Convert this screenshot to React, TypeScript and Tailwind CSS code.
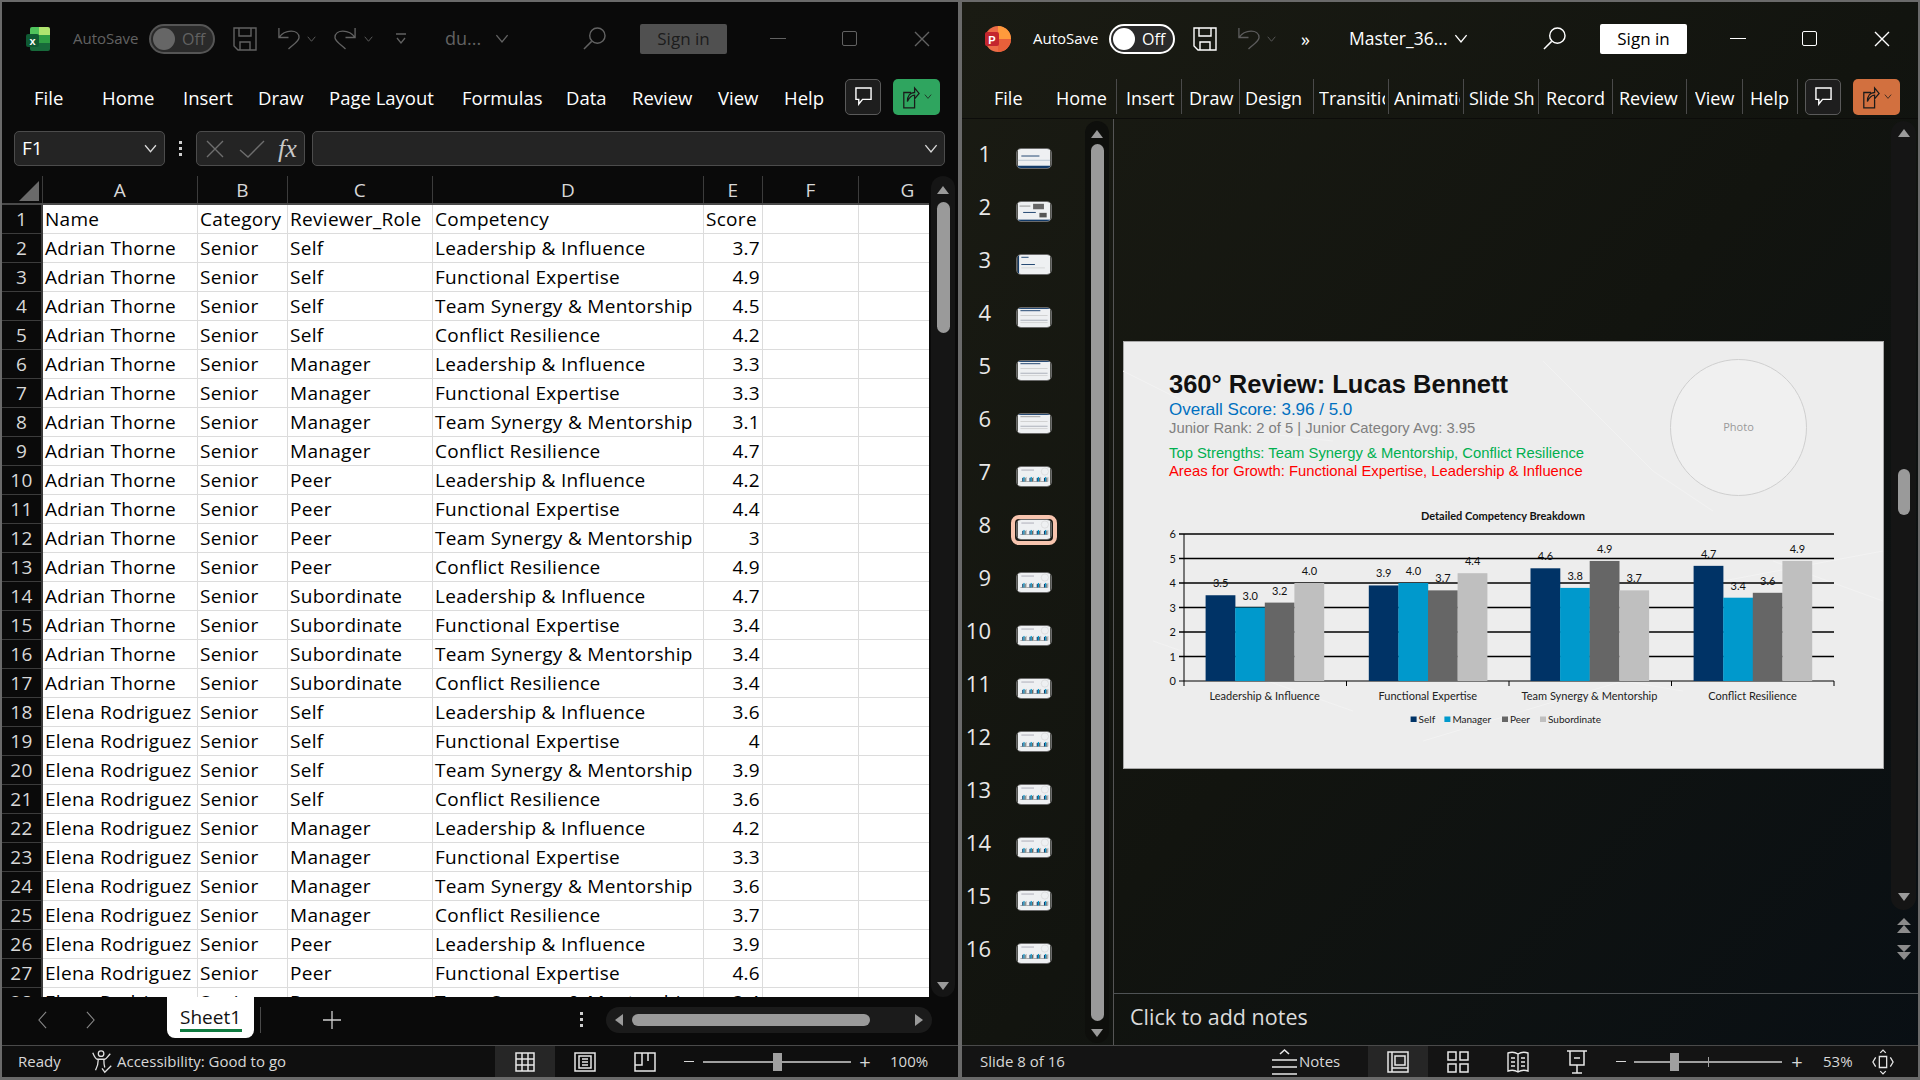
const names = ["Adrian Thorne", "Elena Rodriguez"];
const comps = ["Leadership & Influence", "Functional Expertise", "Team Synergy & Mentorship", "Conflict Resilience"];
const roles = ["Self", "Manager", "Peer", "Subordinate"];
const scores = ["3.7", "4.9", "4.5", "4.2", "3.3", "3.3", "3.1", "4.7", "4.2", "4.4", "3", "4.9", "4.7", "3.4", "3.4", "3.4", "3.6", "4", "3.9", "3.6", "4.2", "3.3", "3.6", "3.7", "3.9", "4.6", "3.4"];

const rows = scores.map((score, i) => ({
  name: names[Math.floor(i / 16)],
  role: roles[Math.floor(i / 4) % 4],
  comp: comps[i % 4],
  score,
}));

const chartData = [
  { label: "Leadership & Influence", x: 82.6, vals: [3.5, 3.0, 3.2, 4.0] },
  { label: "Functional Expertise", x: 245.8, vals: [3.9, 4.0, 3.7, 4.4] },
  { label: "Team Synergy & Mentorship", x: 407.5, vals: [4.6, 3.8, 4.9, 3.7] },
  { label: "Conflict Resilience", x: 570.6, vals: [4.7, 3.4, 3.6, 4.9] },
];
const barColors = ["#003366", "#0099cc", "#666666", "#bfbfbf"];

const Tri = ({ dir = "up", className = "" }: { dir?: "up" | "down" | "left" | "right"; className?: string }) => {
  const pts = { up: "6,1 12,9 0,9", down: "0,1 12,1 6,9", left: "9,0 9,12 1,6", right: "1,0 1,12 9,6" }[dir];
  const box = dir === "left" || dir === "right" ? "0 0 10 12" : "0 0 12 10";
  const size = dir === "left" || dir === "right" ? "w-[10px] h-[12px]" : "w-[12px] h-[10px]";
  return (
    <svg viewBox={box} className={`${size} shrink-0 ${className}`} fill="#9a9a9a">
      <polygon points={pts} />
    </svg>
  );
};

const Chevron = ({ className = "" }: { className?: string }) => (
  <svg viewBox="0 0 12 8" className={className} fill="none" stroke="currentColor" strokeWidth="1.2">
    <path d="M1 1l5 6 5-6" />
  </svg>
);

const SaveIcon = () => (
  <svg viewBox="0 0 24 24" className="w-[24px] h-[24px] ml-[18px] shrink-0" fill="none" stroke="currentColor" strokeWidth="1.4">
    <path d="M1 1h22v22H5l-4-4z" />
    <path d="M6 1v8h12V1M7 23v-8h10v8" />
  </svg>
);

const UndoIcon = ({ className = "" }: { className?: string }) => (
  <svg viewBox="0 0 24 24" className={`w-[23px] h-[23px] shrink-0 ${className}`} fill="none" stroke="currentColor" strokeWidth="1.4">
    <path d="M2 1v10h10M2 11C8 2 23 2 23 11c0 4-7 8-11 12" />
  </svg>
);

const ExcelLogo = () => (
  <svg viewBox="0 0 24 24" className="w-[24px] h-[24px] shrink-0">
    <path d="M4 2a2 2 0 0 1 2-2h7v8H4z" fill="#4fc35c" />
    <path d="M13 0h9a2 2 0 0 1 2 2v6H13z" fill="#b0e56f" />
    <path d="M4 8h9v8H4z" fill="#1f8f45" />
    <path d="M13 8h11v8H13z" fill="#2f9e44" />
    <path d="M4 16h20v6a2 2 0 0 1-2 2H6a2 2 0 0 1-2-2z" fill="#17693a" />
    <rect x="0" y="7" width="13" height="13" rx="2" fill="#0f5a33" />
    <text x="6.5" y="17.5" textAnchor="middle" fontSize="11" fontWeight="700" fill="#fff" fontFamily="Liberation Sans, sans-serif">x</text>
  </svg>
);

const PptLogo = () => (
  <svg viewBox="0 0 26 26" className="w-[26px] h-[26px] shrink-0">
    <circle cx="13" cy="13" r="13" fill="#ed6c47" />
    <path d="M13 0a13 13 0 0 1 13 13H13z" fill="#ff9a3c" />
    <path d="M13 13h13a13 13 0 0 1-13 13z" fill="#e8603a" />
    <rect x="0" y="6" width="14" height="14" rx="2" fill="#c4262e" />
    <text x="7" y="17.5" textAnchor="middle" fontSize="11" fontWeight="700" fill="#fff" fontFamily="Liberation Sans, sans-serif">P</text>
  </svg>
);

const TitleBar = ({ ppt }: { ppt?: boolean }) => (
  <div className={`h-[73px] flex items-center shrink-0 ${ppt ? "pl-[23px] text-white" : "pl-[24px] text-[#626262]"}`}>
    {ppt ? <PptLogo /> : <ExcelLogo />}
    <span className={`${ppt ? "ml-[22px]" : "ml-[23px]"} w-[66px] text-[15px] whitespace-nowrap`}>AutoSave</span>
    <div className={`ml-[10px] w-[66px] h-[30px] rounded-full border-2 flex items-center pl-[2px] shrink-0 ${ppt ? "border-white bg-[#2a2a2a]" : "border-[#555] bg-[#2a2a2a]"}`}>
      <div className={`w-[22px] h-[22px] rounded-full ${ppt ? "bg-white" : "bg-[#666]"}`}></div>
      <span className="ml-[7px] text-[16px]">Off</span>
    </div>
    <SaveIcon />
    <UndoIcon className={`ml-[20px] ${ppt ? "text-[#5c5c5c]" : ""}`} />
    <Chevron className={`ml-[7px] w-[9px] h-[6px] shrink-0 ${ppt ? "text-[#5c5c5c]" : ""}`} />
    {ppt ? (
      <>
        <span className="ml-[25px] w-[18px] text-[18px] leading-none">»</span>
        <span className="ml-[30px] w-[91px] text-[17.5px] whitespace-nowrap">Master_36...</span>
        <Chevron className="ml-[14px] w-[14px] h-[9px] shrink-0" />
        <div className="ml-[75px]"></div>
      </>
    ) : (
      <>
        <UndoIcon className="ml-[18px] -scale-x-100" />
        <Chevron className="ml-[7px] w-[9px] h-[6px] shrink-0" />
        <svg viewBox="0 0 12 14" className="ml-[22px] w-[12px] h-[14px] shrink-0" fill="none" stroke="currentColor" strokeWidth="1.3">
          <path d="M1 2h10M2 6l4 5 4-5" />
        </svg>
        <span className="ml-[38px] w-[36px] text-[18px] whitespace-nowrap">du...</span>
        <Chevron className="ml-[14px] w-[14px] h-[9px] shrink-0" />
        <div className="ml-[74px]"></div>
      </>
    )}
    <svg viewBox="0 0 24 24" className="w-[23px] h-[23px] shrink-0" fill="none" stroke="currentColor" strokeWidth="1.5">
      <circle cx="15" cy="9" r="8" />
      <path d="M9 15L1 23" />
    </svg>
    <div className={`ml-[34px] w-[87px] h-[30px] rounded-[2px] flex items-center justify-center text-[17px] shrink-0 ${ppt ? "bg-white text-black" : "bg-[#505050] text-[#1c1c1c]"}`}>
      Sign in
    </div>
    <div className="ml-[43px] w-[16px] h-[1.5px] bg-current shrink-0"></div>
    <div className="ml-[56px] w-[15px] h-[15px] border-[1.5px] border-current rounded-[2px] shrink-0"></div>
    <svg viewBox="0 0 16 16" className="ml-[57px] w-[16px] h-[16px] shrink-0" fill="none" stroke="currentColor" strokeWidth="1.4">
      <path d="M1 1l14 14M15 1L1 15" />
    </svg>
  </div>
);

const RibbonButtons = ({ ppt }: { ppt?: boolean }) => (
  <>
    <div className="w-[36px] h-[36px] rounded-[5px] border border-[#5a5a5a] bg-[#1e1e1e] flex items-center justify-center shrink-0">
      <svg viewBox="0 0 18 20" className="w-[17px] h-[19px]" fill="none" stroke="#fff" strokeWidth="1.5">
        <path d="M1 1h16v12H8l-4 5v-5H1z" />
      </svg>
    </div>
    <div className={`ml-[12px] w-[47px] h-[36px] rounded-[5px] flex items-center justify-center gap-[4px] shrink-0 ${ppt ? "bg-[#d2703f]" : "bg-[#2fa55f]"}`}>
      <svg viewBox="0 0 20 26" className="w-[18px] h-[24px]" fill="none" stroke="#1a1a1a" strokeWidth="1.4">
        <path d="M10 8H2v17h12v-9M6 18c0-6 3-10 8-10V3l5 6-5 6v-4c-3 0-6 3-8 7z" />
      </svg>
      <Chevron className="w-[8px] h-[5px] text-[#1a1a1a]" />
    </div>
  </>
);

const xlTabs = [
  { label: "File", cls: "w-[68px]" },
  { label: "Home", cls: "w-[81px]" },
  { label: "Insert", cls: "w-[75px]" },
  { label: "Draw", cls: "w-[71px]" },
  { label: "Page Layout", cls: "w-[133px]" },
  { label: "Formulas", cls: "w-[104px]" },
  { label: "Data", cls: "w-[66px]" },
  { label: "Review", cls: "w-[86px]" },
  { label: "View", cls: "w-[66px]" },
  { label: "Help", cls: "w-[61px]" },
];

const pptTabs = [
  { label: "Home", cls: "w-[60px] pl-0" },
  { label: "Insert", cls: "w-[65px] pl-[9px] border-l" },
  { label: "Draw", cls: "w-[58px] pl-[7px] border-l" },
  { label: "Design", cls: "w-[74px] pl-[5px] border-l" },
  { label: "Transitions", cls: "w-[75px] pl-[5px] border-l" },
  { label: "Animations", cls: "w-[75px] pl-[5px] border-l" },
  { label: "Slide Show", cls: "w-[75px] pl-[5px] border-l" },
  { label: "Record", cls: "w-[74px] pl-[7px] border-l" },
  { label: "Review", cls: "w-[74px] pl-[6px] border-l" },
  { label: "View", cls: "w-[56px] pl-[8px] border-l" },
  { label: "Help", cls: "w-[55px] pl-[7px] border-l" },
];

const colHeads = [
  { label: "A", cls: "w-[155px]" },
  { label: "B", cls: "w-[90px]" },
  { label: "C", cls: "w-[145px]" },
  { label: "D", cls: "w-[271px]" },
  { label: "E", cls: "w-[59px]" },
  { label: "F", cls: "w-[96px]" },
  { label: "G", cls: "w-[98px]" },
];

const Cell = ({ w, children, right }: { w: string; children?: React.ReactNode; right?: boolean }) => (
  <div className={`${w} h-full border-r border-[#dcdcdc] px-[2px] pt-[1px] flex items-center whitespace-nowrap overflow-hidden shrink-0 ${right ? "justify-end" : ""}`}>
    {children}
  </div>
);

const Row = ({ n, a, b, c, d, e, headScore }: { n: number; a: string; b: string; c: string; d: string; e: string; headScore?: boolean }) => (
  <div className="flex h-[29px] shrink-0">
    <div className="w-[41px] shrink-0 bg-[#0a0a0a] border-r-2 border-b border-[#3c3c3c] text-[#d8d8d8] flex items-center justify-center">{n}</div>
    <div className="flex flex-1 bg-white text-black border-b border-[#dcdcdc]">
      <Cell w="w-[155px]">{a}</Cell>
      <Cell w="w-[90px]">{b}</Cell>
      <Cell w="w-[145px]">{c}</Cell>
      <Cell w="w-[271px]">{d}</Cell>
      <Cell w="w-[59px]" right={!headScore}>{e}</Cell>
      <Cell w="w-[96px]" />
      <div className="flex-1"></div>
    </div>
  </div>
);

const Track = ({ w, thumb, tick }: { w: string; thumb: string; tick?: string }) => (
  <div className={`${w} h-[2px] bg-[#a0a0a0] relative shrink-0`}>
    <div className={`absolute top-[-8px] w-[9px] h-[18px] bg-[#a0a0a0] ${thumb}`}></div>
    {tick && <div className={`absolute top-[-4px] w-[1px] h-[10px] bg-[#a0a0a0] ${tick}`}></div>}
  </div>
);

const ExcelWindow = () => (
  <div className="w-[956px] h-full bg-[#0a0a0a] flex flex-col shrink-0">
    <TitleBar />
    <div className="h-[43px] pl-[32px] flex items-center text-white text-[18.5px] shrink-0">
      {xlTabs.map((t) => (
        <div key={t.label} className={`${t.cls} pt-[3px] shrink-0`}>{t.label}</div>
      ))}
      <RibbonButtons />
    </div>
    <div className="h-[58px] pt-[13px] pl-[12px] flex items-start shrink-0">
      <div className="w-[151px] h-[35px] rounded-[5px] border border-[#4c4c4c] bg-[#242424] flex items-center justify-between px-[7px] text-white text-[19px]">
        F1
        <Chevron className="w-[13px] h-[9px] text-[#d8d8d8]" />
      </div>
      <div className="w-[31px] h-[35px] flex flex-col items-center justify-center gap-[3px]">
        <div className="w-[3px] h-[3px] bg-[#cfcfcf]"></div>
        <div className="w-[3px] h-[3px] bg-[#cfcfcf]"></div>
        <div className="w-[3px] h-[3px] bg-[#cfcfcf]"></div>
      </div>
      <div className="w-[109px] h-[35px] rounded-[5px] border border-[#4c4c4c] bg-[#242424] flex items-center pl-[9px] text-[#6e6e6e]">
        <svg viewBox="0 0 18 18" className="w-[18px] h-[18px] shrink-0" fill="none" stroke="currentColor" strokeWidth="1.4"><path d="M1 1l16 16M17 1L1 17" /></svg>
        <svg viewBox="0 0 26 18" className="ml-[15px] w-[26px] h-[18px] shrink-0" fill="none" stroke="currentColor" strokeWidth="1.4"><path d="M1 10l8 7L25 1" /></svg>
        <span className="ml-[13px] font-['Liberation_Serif',serif] italic text-[26px] text-[#c8c8c8] leading-none">fx</span>
      </div>
      <div className="ml-[7px] w-[633px] h-[35px] rounded-[5px] border border-[#4c4c4c] bg-[#242424] flex items-center justify-end pr-[6px]">
        <Chevron className="w-[14px] h-[9px] text-[#d8d8d8]" />
      </div>
    </div>
    <div className="h-[821px] flex shrink-0">
      <div className="w-[927px] h-full flex flex-col overflow-hidden text-[19px] tracking-[0.3px] shrink-0">
        <div className="flex h-[29px] shrink-0 border-b-2 border-[#4a4a4a] text-[#d8d8d8]">
          <div className="w-[41px] shrink-0 flex items-end justify-end pr-[3px] pb-[2px] border-r border-[#3c3c3c]">
            <svg viewBox="0 0 20 20" className="w-[20px] h-[20px]"><polygon points="20,0 20,20 0,20" fill="#6a6a6a" /></svg>
          </div>
          {colHeads.map((c) => (
            <div key={c.label} className={`${c.cls} shrink-0 border-r border-[#3c3c3c] pt-[1px] flex items-center justify-center`}>{c.label}</div>
          ))}
        </div>
        <Row n={1} a="Name" b="Category" c="Reviewer_Role" d="Competency" e="Score" headScore />
        {rows.map((r, i) => (
          <Row key={i} n={i + 2} a={r.name} b="Senior" c={r.role} d={r.comp} e={r.score} />
        ))}
      </div>
      <div className="ml-[2px] w-[24px] h-full rounded-full bg-[#151515] flex flex-col items-center pt-[9px] pb-[6px]">
        <Tri />
        <div className="mt-[7px] w-[13px] h-[131px] rounded-full bg-[#9a9a9a]"></div>
        <div className="flex-1"></div>
        <Tri dir="down" />
      </div>
    </div>
    <div className="h-[48px] flex items-start shrink-0 border-b border-[#4a4a4a] box-content">
      <div className="w-[165px] h-[46px] flex items-center text-[#8a8a8a]">
        <svg viewBox="0 0 10 20" className="ml-[36px] w-[9px] h-[20px]" fill="none" stroke="currentColor" strokeWidth="1.2"><path d="M9 1L1 10l8 9" /></svg>
        <svg viewBox="0 0 10 20" className="ml-[39px] w-[9px] h-[20px]" fill="none" stroke="currentColor" strokeWidth="1.2"><path d="M1 1l8 9-8 9" /></svg>
      </div>
      <div className="w-[87px] h-[41px] bg-white rounded-b-[8px] flex flex-col items-center pt-[7px] text-[#111] text-[19px] leading-[26px] shrink-0">
        Sheet1
        <div className="mt-[-1px] w-[62px] h-[3px] bg-[#107c41]"></div>
      </div>
      <div className="ml-[6px] mt-[10px] w-[1px] h-[26px] bg-[#4a4a4a]"></div>
      <svg viewBox="0 0 18 18" className="ml-[62px] mt-[14px] w-[18px] h-[18px]" fill="none" stroke="#d0d0d0" strokeWidth="1.3"><path d="M9 0v18M0 9h18" /></svg>
      <div className="ml-[239px] mt-[15px] flex flex-col gap-[3px]">
        <div className="w-[3px] h-[3px] bg-[#cfcfcf]"></div>
        <div className="w-[3px] h-[3px] bg-[#cfcfcf]"></div>
        <div className="w-[3px] h-[3px] bg-[#cfcfcf]"></div>
      </div>
      <div className="ml-[23px] mt-[10px] w-[326px] h-[26px] rounded-full bg-[#1b1b1b] flex items-center pl-[8px] pr-[8px]">
        <Tri dir="left" />
        <div className="ml-[8px] w-[238px] h-[12px] rounded-full bg-[#9a9a9a]"></div>
        <div className="flex-1"></div>
        <Tri dir="right" />
      </div>
    </div>
    <div className="flex-1 flex items-center text-[#d8d8d8] text-[15px] bg-[#0f0f0f]">
      <span className="ml-[16px] w-[72px]">Ready</span>
      <svg viewBox="0 0 24 26" className="w-[24px] h-[24px] shrink-0" fill="none" stroke="#e0e0e0" strokeWidth="1.4">
        <circle cx="11" cy="4" r="3" />
        <path d="M2 3c2 5 4 7 5 7h8c2 0 3-3 6-6M8 10c0 4-1 8-3 12M14 10c0 4 0 6 1 9M12 20l3 4 7-7" />
      </svg>
      <span className="ml-[3px] whitespace-nowrap">Accessibility: Good to go</span>
      <div className="flex-1"></div>
      <div className="w-[60px] h-[31px] bg-[#262626] flex items-center justify-center shrink-0">
        <svg viewBox="0 0 20 20" className="w-[20px] h-[20px]" fill="none" stroke="#e8e8e8" strokeWidth="1.5"><path d="M1 1h18v18H1zM7 1v18M13 1v18M1 7h18M1 13h18" /></svg>
      </div>
      <div className="w-[60px] h-[31px] flex items-center justify-center shrink-0">
        <svg viewBox="0 0 22 20" className="w-[22px] h-[20px]" fill="none" stroke="#e8e8e8" strokeWidth="1.5"><path d="M1 1h20v18H1zM5 4h12v12H5zM8 7h6M8 10h6M8 13h6" /></svg>
      </div>
      <div className="w-[60px] h-[31px] flex items-center justify-center shrink-0">
        <svg viewBox="0 0 22 20" className="w-[22px] h-[20px]" fill="none" stroke="#e8e8e8" strokeWidth="1.5"><path d="M1 1h20v18H1zM8 1v12H1M14 1v8" /></svg>
      </div>
      <div className="w-[28px] flex justify-center shrink-0"><div className="w-[10px] h-[1.5px] bg-[#d8d8d8]"></div></div>
      <Track w="w-[148px]" thumb="left-[70px]" />
      <span className="w-[28px] text-center text-[20px] leading-none shrink-0">+</span>
      <span className="ml-[11px] w-[68px] whitespace-nowrap shrink-0">100%</span>
    </div>
  </div>
);

const Thumb = ({ n }: { n: number }) => {
  const bars = n >= 7;
  return (
    <svg viewBox="0 0 36 21" className="w-[36px] h-[21px] rounded-[5px] border border-[#6a6a6a] shrink-0">
      <rect width="36" height="21" fill="#eef0f2" />
      {n === 1 && (
        <>
          <rect x="4" y="7" width="20" height="1.5" fill="#5c7696" />
          <rect x="0" y="12" width="36" height="0.7" fill="#9fb0c0" />
          <rect x="0" y="18.5" width="36" height="2.5" fill="#123a68" />
        </>
      )}
      {n === 2 && (
        <>
          <rect x="2" y="4" width="12" height="1" fill="#8b8b8b" />
          <rect x="17" y="2" width="12" height="6" fill="#666" />
          <rect x="6" y="11" width="14" height="1" fill="#123a68" />
          <rect x="24" y="12" width="8" height="5" fill="#555" />
          <rect x="0" y="19.5" width="36" height="1.5" fill="#123a68" />
        </>
      )}
      {n === 3 && (
        <>
          <rect x="0" y="0" width="1.500" height="21" fill="#123a68" />
          <rect x="4" y="2" width="8" height="1" fill="#123a68" />
          <rect x="4" y="10" width="15" height="1" fill="#123a68" />
          <rect x="4" y="14" width="26" height="0.6" fill="#c4c4c4" />
        </>
      )}
      {(n === 4 || n === 5 || n === 6) && (
        <>
          <rect x="0" y="0" width="36" height="1" fill="#123a68" />
          <rect x="3" y="2.500" width="22" height="1" fill={n === 6 ? "#999" : "#123a68"} />
          <rect x="3" y="8" width="30" height="0.7" fill="#c0c0c0" />
          <rect x="3" y="13" width="30" height="1" fill="#a4abb5" />
          <rect x="3" y="16" width="30" height="0.6" fill="#c0c0c0" />
        </>
      )}
      {bars && (
        <>
          <rect x="4" y="3" width="14" height="0.7" fill="#8a8a9a" />
          <circle cx="30" cy="5" r="4" fill="none" stroke="#d0d0d0" strokeWidth="0.6" />
          <rect x="3" y="16" width="30" height="0.5" fill="#555" />
          {[5, 13, 21, 29].map((x) => (
            <g key={x}>
              <rect x={x} y="12" width="1.3" height="4" fill="#123a68" />
              <rect x={x + 1.3} y="11" width="1.3" height="5" fill="#0099cc" />
              <rect x={x + 2.6} y="12" width="1.3" height="4" fill="#666" />
              <rect x={x + 3.9} y="11" width="1" height="5" fill="#b4b4b4" />
            </g>
          ))}
        </>
      )}
    </svg>
  );
};

const Chart = () => {
  const y0 = 341;
  const unit = 24.5;
  return (
    <svg viewBox="0 155 761 273" className="w-[761px] h-[273px] font-['Lato',sans-serif]">
      <text x="380" y="178.500" textAnchor="middle" fontSize="11" fontWeight="700" fill="#111">Detailed Competency Breakdown</text>
      {[0, 1, 2, 3, 4, 5, 6].map((v) => (
        <g key={v}>
          <line x1="56" x2="711" y1={y0 - 1 - v * unit} y2={y0 - 1 - v * unit} stroke="#000" strokeWidth={v === 0 ? 1 : 1.3} />
          <text x="53" y={y0 - 1 - v * unit + 4} textAnchor="end" fontSize="11" fill="#111">{v}</text>
        </g>
      ))}
      <line x1="61" x2="61" y1={y0 - 1 - 6 * unit} y2={y0 + 4} stroke="#000" />
      {[223.5, 386, 548.5, 711].map((x) => (
        <line key={x} x1={x} x2={x} y1={y0 - 1} y2={y0 + 4} stroke="#000" />
      ))}
      {chartData.map((g) => (
        <g key={g.label}>
          {g.vals.map((v, i) => (
            <g key={i}>
              <rect x={g.x + i * 29.6} y={y0 - 1 - v * unit} width="29.8" height={v * unit} fill={barColors[i]} />
              <text x={g.x + i * 29.6 + 15} y={y0 - 1 - v * unit - 8} textAnchor="middle" fontSize="11" fill="#111">{v.toFixed(1)}</text>
            </g>
          ))}
          <text x={g.x + 59} y="359" textAnchor="middle" fontSize="11" fill="#222">{g.label}</text>
        </g>
      ))}
      {[
        { x: 287.6, c: barColors[0], t: "Self" },
        { x: 321.4, c: barColors[1], t: "Manager" },
        { x: 379, c: barColors[2], t: "Peer" },
        { x: 417, c: barColors[3], t: "Subordinate" },
      ].map((l) => (
        <g key={l.t}>
          <rect x={l.x} y="375.5" width="6" height="5.5" fill={l.c} />
          <text x={l.x + 8} y="382" fontSize="10" fill="#222">{l.t}</text>
        </g>
      ))}
    </svg>
  );
};

const PptWindow = () => (
  <div className="w-[956px] h-full bg-linear-to-br from-[#1a1b13] via-[#12140f] to-[#090f14] flex flex-col shrink-0">
    <TitleBar ppt />
    <div className="h-[43px] flex items-center text-white text-[18px] shrink-0 border-b border-[#0c0c0a] box-content">
      <div className="ml-[32px] w-[62px] pt-[3px] shrink-0">File</div>
      {pptTabs.map((t) => (
        <div key={t.label} className={`${t.cls} h-[35px] border-[#4a4a4a] pt-[3px] flex items-center shrink-0`}>
          <div className="w-full mr-[3px] overflow-hidden whitespace-nowrap">{t.label}</div>
        </div>
      ))}
      <div className="w-[8px] h-[35px] border-l border-[#4a4a4a] shrink-0"></div>
      <RibbonButtons ppt />
    </div>
    <div className="flex-1 min-h-0 flex">
      <div className="w-[123px] pt-[8px] flex flex-col shrink-0">
        {Array.from({ length: 16 }, (_, i) => i + 1).map((n) => (
          <div key={n} className="h-[53px] flex items-center shrink-0">
            <span className="w-[29px] text-right text-[22px] text-[#e8e8e8] shrink-0">{n}</span>
            {n === 8 ? (
              <div className="ml-[20px] mt-[10px] w-[46px] h-[30px] rounded-[8px] bg-[#1a1a16] border-[4px] border-[#f7c4ae] flex items-center justify-center shrink-0">
                <Thumb n={n} />
              </div>
            ) : (
              <div className="ml-[25px] mt-[10px] flex"><Thumb n={n} /></div>
            )}
          </div>
        ))}
      </div>
      <div className="w-[24px] my-[2px] rounded-full bg-[#0e0f0c] flex flex-col items-center pt-[8px] pb-[5px] shrink-0">
        <Tri />
        <div className="mt-[5px] w-[13px] flex-1 rounded-full bg-[#9a9a9a]"></div>
        <Tri dir="down" className="mt-[7px]" />
      </div>
      <div className="ml-[4px] flex-1 border-l border-[#555] flex flex-col">
        <div className="flex-1 flex">
          <div className="ml-[9px] mt-[222px] w-[761px] h-[428px] bg-[#ededed] outline outline-[#a8a8a8] -outline-offset-1 relative text-black shrink-0">
            <svg viewBox="0 0 761 428" className="absolute inset-0 w-full h-full" fill="none" stroke="#f2f2f2" strokeWidth="1">
              <path d="M0 30l120 60 90 10M420 20l110 110 60 40M600 240l160-30M650 220l110 40M30 300l200 70M300 400l200-60 60 10" />
            </svg>
            <div className="relative flex">
              <div className="ml-[46px] mt-[27px] w-[501px] font-['Liberation_Sans',sans-serif] shrink-0">
                <div className="h-[32px] text-[25.5px] leading-[32px] font-bold text-[#111] whitespace-nowrap">360° Review: Lucas Bennett</div>
                <div className="h-[19px] text-[17px] leading-[19px] text-[#0070c0]">Overall Score: 3.96 / 5.0</div>
                <div className="h-[18px] text-[14.8px] leading-[18px] text-[#7f7f7f]">Junior Rank: 2 of 5 | Junior Category Avg: 3.95</div>
                <div className="mt-[7px] h-[18px] text-[14.8px] leading-[18px] text-[#00b050] whitespace-nowrap">Top Strengths: Team Synergy &amp; Mentorship, Conflict Resilience</div>
                <div className="h-[18px] text-[14.8px] leading-[18px] text-[#ff0000] whitespace-nowrap">Areas for Growth: Functional Expertise, Leadership &amp; Influence</div>
              </div>
              <div className="mt-[18px] w-[137px] h-[137px] rounded-full border border-[#cfcfcf] bg-[#f0f0f0] flex items-center justify-center text-[11px] text-[#999] shrink-0">
                Photo
              </div>
            </div>
            <div className="relative"><Chart /></div>
          </div>
          <div className="ml-[7px] w-[25px] flex flex-col items-center shrink-0">
            <div className="mt-[2px] w-full h-[789px] rounded-full bg-[#151515] flex flex-col items-center pt-[7px] pb-[8px]">
              <Tri />
              <div className="mt-[331px] w-[12px] h-[46px] rounded-full bg-[#9a9a9a]"></div>
              <div className="flex-1"></div>
              <Tri dir="down" />
            </div>
            <svg viewBox="0 0 14 16" className="mt-[8px] w-[14px] h-[16px]" fill="#8c8c8c"><path d="M7 0l7 7H0zM7 7l7 8H0z" /></svg>
            <svg viewBox="0 0 14 16" className="mt-[10px] w-[14px] h-[16px]" fill="#8c8c8c"><path d="M0 1h14L7 8zM0 8h14l-7 8z" /></svg>
          </div>
        </div>
        <div className="h-[52px] border-t border-[#4f5355] pl-[16px] pb-[5px] flex items-center text-[21.5px] text-[#dcdcdc] shrink-0">
          Click to add notes
        </div>
      </div>
    </div>
    <div className="h-[32px] border-t border-[#4a4a4a] flex items-center text-[#d8d8d8] text-[15px] bg-[#141414] shrink-0">
      <span className="ml-[18px] w-[292px] whitespace-nowrap">Slide 8 of 16</span>
      <svg viewBox="0 0 25 28" className="w-[25px] h-[28px] shrink-0" fill="none" stroke="#e8e8e8" strokeWidth="1.6">
        <path d="M8 6l4.500-4 4.500 4M0 12h25M0 19h25M0 26h25" />
      </svg>
      <span className="ml-[2px] w-[69px] shrink-0">Notes</span>
      <div className="w-[60px] h-[31px] bg-[#262626] flex items-center justify-center shrink-0">
        <svg viewBox="0 0 22 22" className="w-[22px] h-[22px]" fill="none" stroke="#e8e8e8" strokeWidth="1.5"><path d="M1 1h20v20H1zM5 1v20M8 5h10v9H8zM5 17h16" /></svg>
      </div>
      <div className="w-[60px] h-[31px] flex items-center justify-center shrink-0">
        <svg viewBox="0 0 22 22" className="w-[22px] h-[22px]" fill="none" stroke="#e8e8e8" strokeWidth="1.5"><path d="M1 1h8v8H1zM13 1h8v8h-8zM1 13h8v8H1zM13 13h8v8h-8z" /></svg>
      </div>
      <div className="w-[59px] h-[31px] flex items-center justify-center shrink-0">
        <svg viewBox="0 0 22 22" className="w-[22px] h-[22px]" fill="none" stroke="#e8e8e8" strokeWidth="1.4"><path d="M11 3C8 1 4 1 1 2v18c3-1 7-1 10 1 3-2 7-2 10-1V2c-3-1-7-1-10 1zM11 3v18M4 7h4M4 11h4M4 15h4M14 7h4M14 11h4M14 15h4" /></svg>
      </div>
      <div className="w-[60px] h-[31px] flex items-center justify-center shrink-0">
        <svg viewBox="0 0 20 24" className="w-[20px] h-[24px]" fill="none" stroke="#e8e8e8" strokeWidth="1.5"><path d="M0 1h20M3 1v14h14V1M7 8h6M10 15v8M5 23h10" /></svg>
      </div>
      <div className="w-[27px] flex justify-center shrink-0"><div className="w-[10px] h-[1.5px] bg-[#d8d8d8]"></div></div>
      <Track w="w-[148px]" thumb="left-[36px]" tick="left-[74px]" />
      <span className="w-[30px] text-center text-[20px] leading-none shrink-0">+</span>
      <span className="ml-[11px] w-[49px] whitespace-nowrap shrink-0">53%</span>
      <svg viewBox="0 0 24 28" className="w-[22px] h-[26px] shrink-0" fill="none" stroke="#e8e8e8" strokeWidth="1.4">
        <path d="M8 8h8v12H8zM4 9l-3 5 3 5M20 9l3 5-3 5M9 4l3-3 3 3M9 24l3 3 3-3" />
      </svg>
    </div>
  </div>
);

export default function App() {
  return (
    <div className="w-[1920px] h-[1080px] bg-[#6a6a6a] pt-[2px] pb-[3px] px-[2px] flex gap-[4px] overflow-hidden font-['Open_Sans',sans-serif]">
      <ExcelWindow />
      <PptWindow />
    </div>
  );
}
